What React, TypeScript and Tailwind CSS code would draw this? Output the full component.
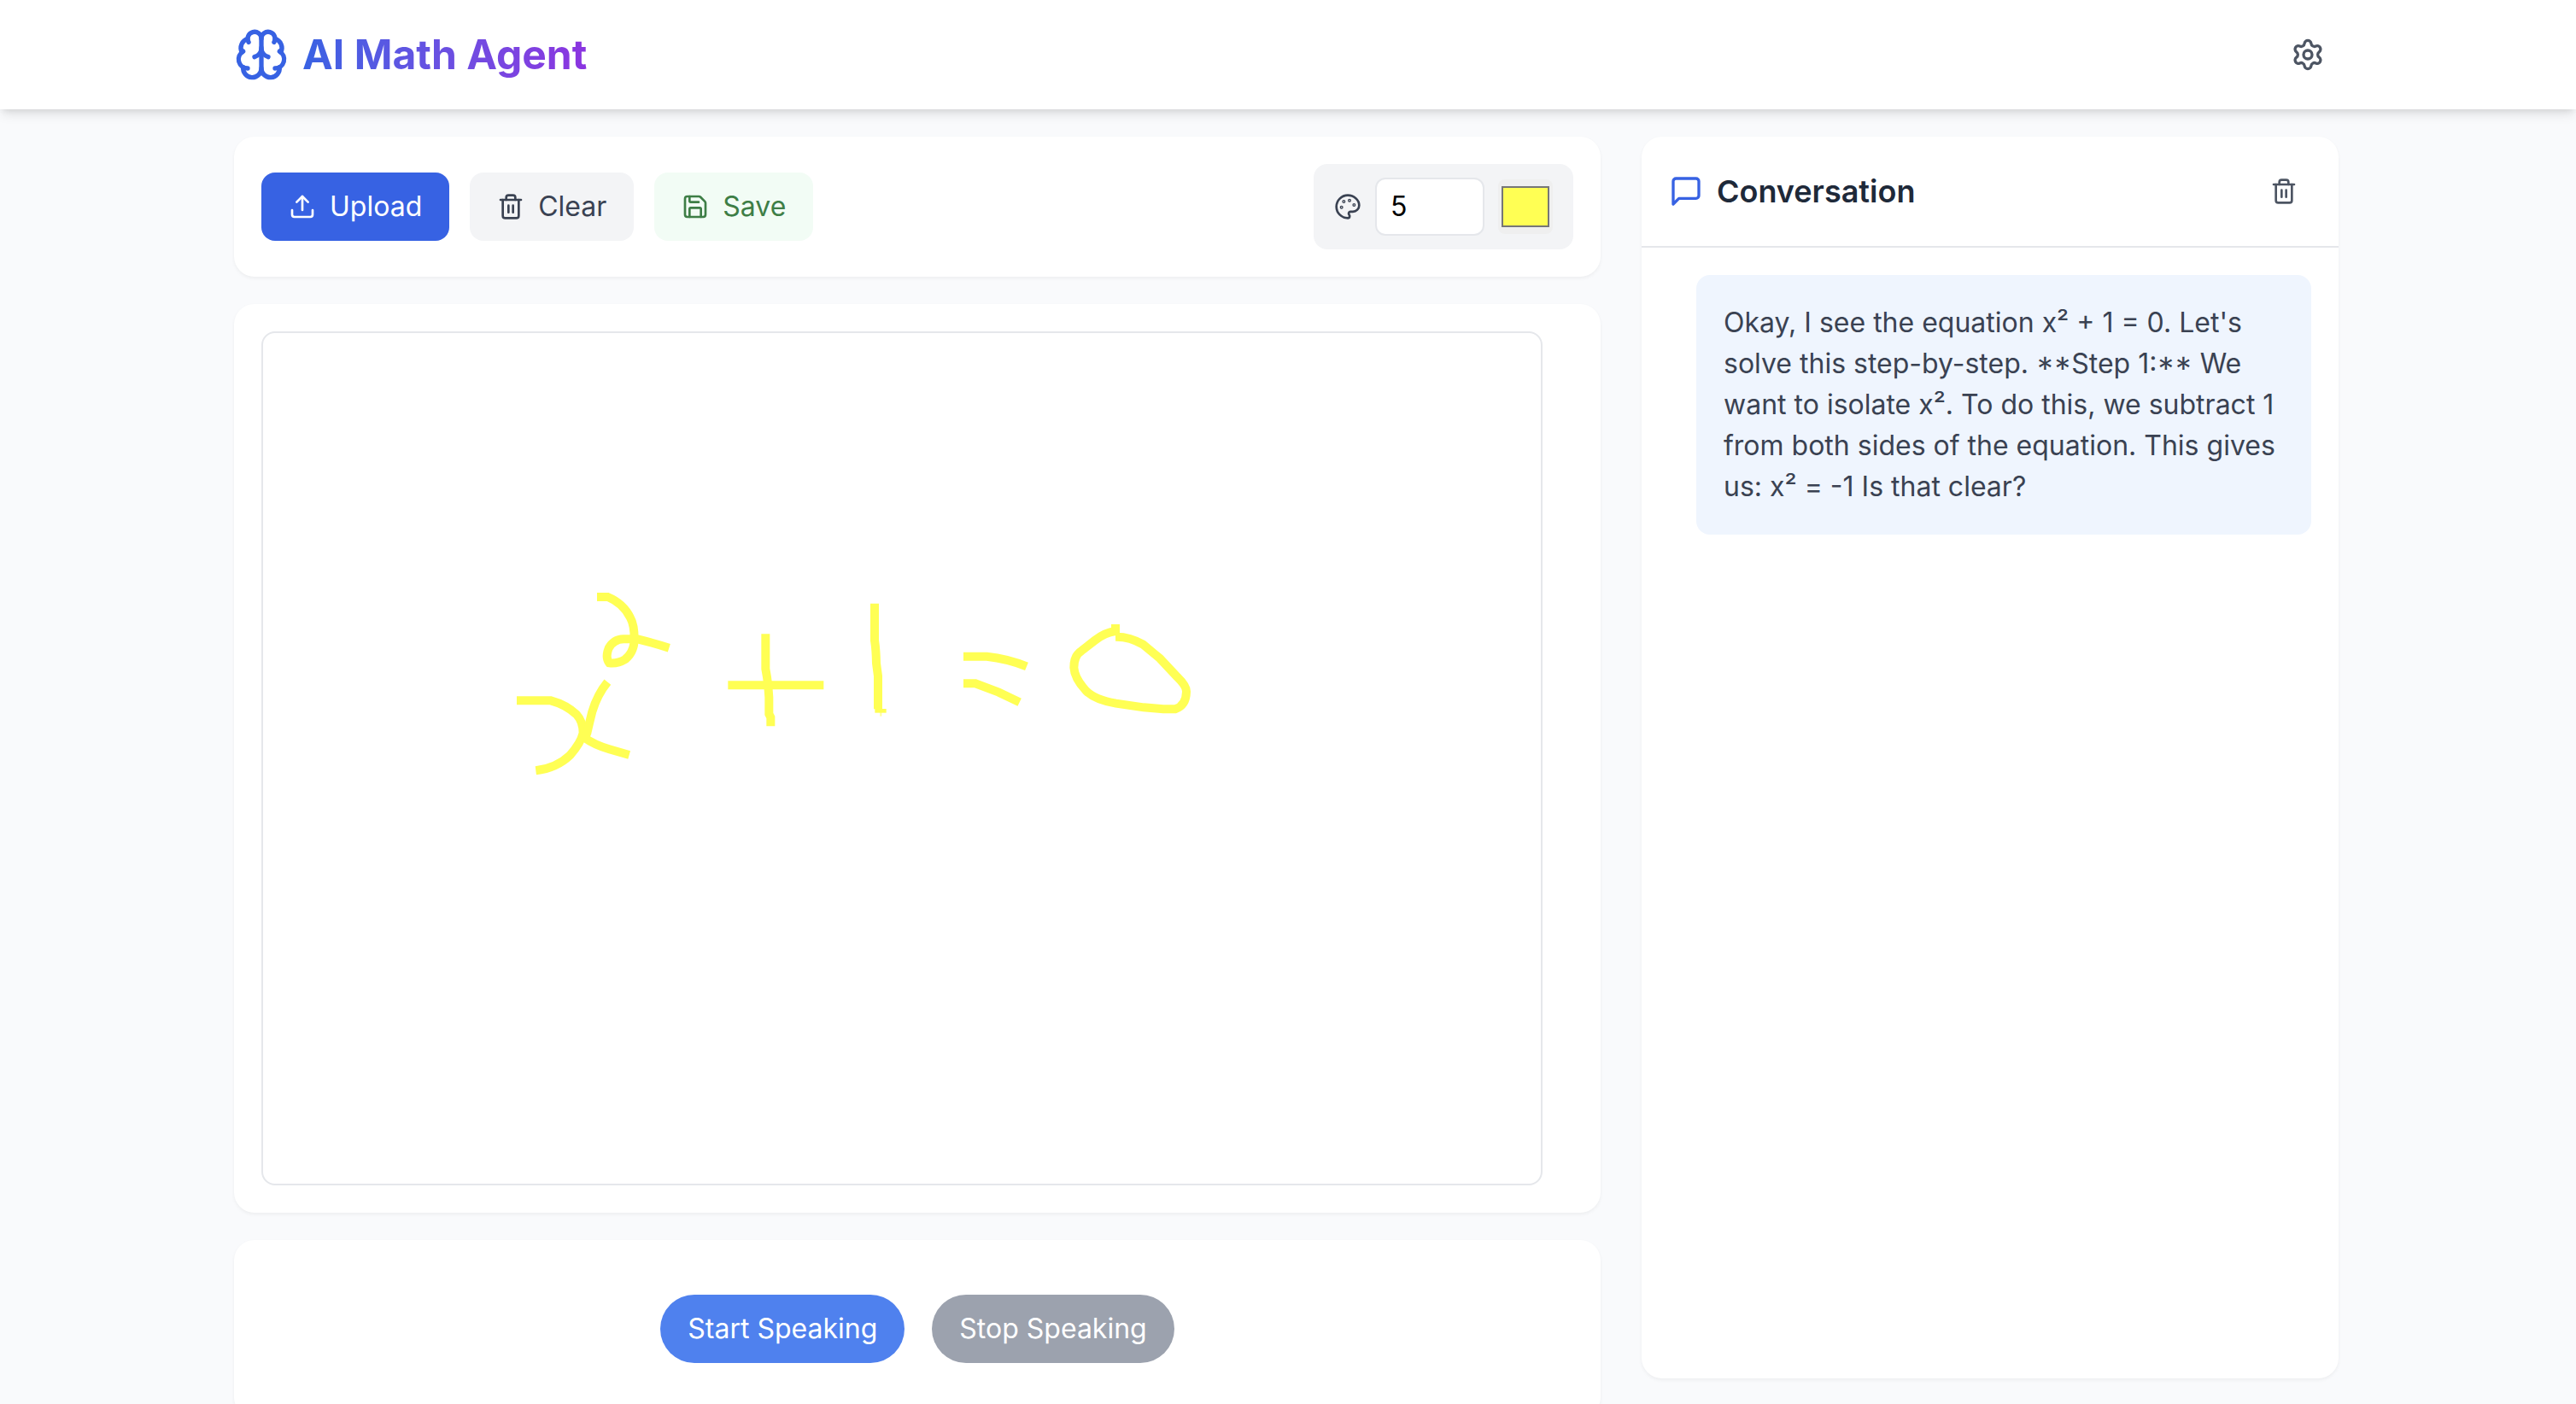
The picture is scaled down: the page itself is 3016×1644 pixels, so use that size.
import React from "react";
import { Brain, Settings } from "lucide-react";

const paths = {
  upload: ["M21 15v4a2 2 0 0 1-2 2H5a2 2 0 0 1-2-2v-4", "M17 8l-5-5-5 5", "M12 3v12"],
  trash: [
    "M3 6h18",
    "M19 6v14a2 2 0 0 1-2 2H7a2 2 0 0 1-2-2V6",
    "M8 6V4a2 2 0 0 1 2-2h4a2 2 0 0 1 2 2v2",
    "M10 11v6",
    "M14 11v6",
  ],
  save: [
    "M15.2 3a2 2 0 0 1 1.4.6l3.8 3.8a2 2 0 0 1 .6 1.4V19a2 2 0 0 1-2 2H5a2 2 0 0 1-2-2V5a2 2 0 0 1 2-2z",
    "M17 21v-7a1 1 0 0 0-1-1H8a1 1 0 0 0-1 1v7",
    "M7 3v4a1 1 0 0 0 1 1h7",
  ],
  message: ["M21 15a2 2 0 0 1-2 2H7l-4 4V5a2 2 0 0 1 2-2h14a2 2 0 0 1 2 2z"],
  palette: [
    "M12 2C6.5 2 2 6.5 2 12s4.5 10 10 10c.926 0 1.648-.746 1.648-1.688 0-.437-.18-.835-.437-1.125-.29-.289-.438-.652-.438-1.125a1.64 1.64 0 0 1 1.668-1.668h1.996c3.051 0 5.555-2.503 5.555-5.554C21.965 6.012 17.461 2 12 2z",
    "M13.5 6a.5.5 0 1 0 0 1 .5.5 0 1 0 0-1z",
    "M17.5 10a.5.5 0 1 0 0 1 .5.5 0 1 0 0-1z",
    "M8.5 7a.5.5 0 1 0 0 1 .5.5 0 1 0 0-1z",
    "M6.5 12a.5.5 0 1 0 0 1 .5.5 0 1 0 0-1z",
  ],
};

function Icon({ name, className }: { name: keyof typeof paths; className: string }) {
  return (
    <svg
      viewBox="0 0 24 24"
      fill="none"
      stroke="currentColor"
      strokeWidth={2}
      strokeLinecap="round"
      strokeLinejoin="round"
      aria-hidden="true"
      className={className}
    >
      {paths[name].map((d) => (
        <path key={d} d={d} />
      ))}
    </svg>
  );
}

const card = "rounded-3xl bg-white shadow-[0_2px_4px_rgba(0,0,0,0.05)]";
const button = "flex items-center gap-4 rounded-2xl px-8 py-4";

function Header() {
  return (
    <header className="relative bg-white pr-1 shadow-[0_8px_12px_-2px_rgba(0,0,0,0.1),0_4px_8px_-4px_rgba(0,0,0,0.1)]">
      <div className="mx-auto flex max-w-[2560px] items-center justify-between px-12 py-8">
        <div className="flex items-center gap-4">
          <Brain className="size-16 text-[#3762e3]" />
          <h1 className="bg-linear-to-r from-[#3762e3] to-[#8b34e0] bg-clip-text text-5xl leading-[64px] font-bold text-transparent">
            AI Math Agent
          </h1>
        </div>
        <button type="button" aria-label="Settings" className="px-4 py-3 text-[#4d5563]">
          <Settings className="size-10" />
        </button>
      </div>
    </header>
  );
}

function Toolbar() {
  return (
    <section className={`${card} flex items-center justify-between p-8`}>
      <div className="flex gap-6">
        <button type="button" className={`${button} bg-[#3762e3] text-white`}>
          <Icon name="upload" className="size-8" />
          Upload
        </button>
        <button type="button" className={`${button} bg-gray-100 text-[#3a4252]`}>
          <Icon name="trash" className="size-8" />
          Clear
        </button>
        <button type="button" className={`${button} bg-[#f2fcf5] text-[#3e7e46]`}>
          <Icon name="save" className="size-8" />
          Save
        </button>
      </div>
      <div className="flex items-center gap-4 rounded-2xl bg-gray-100 px-6 py-4">
        <Icon name="palette" className="size-8 text-[#3a4252]" />
        <input
          type="number"
          aria-label="Brush size"
          defaultValue={5}
          min={1}
          max={50}
          className="w-32 rounded-xl border-2 border-gray-200 bg-white px-4 py-2 text-black"
        />
        <input
          type="color"
          aria-label="Brush colour"
          defaultValue="#ffff54"
          className="size-16 rounded-lg bg-[#efefef] px-1 py-2 [&::-webkit-color-swatch]:rounded-none [&::-webkit-color-swatch]:border-2 [&::-webkit-color-swatch]:border-[#767676] [&::-webkit-color-swatch-wrapper]:p-0"
        />
      </div>
    </section>
  );
}

function Drawing() {
  return (
    <section className={`${card} p-8`}>
      <svg
        viewBox="0 0 4488 2988"
        role="img"
        aria-label="Handwritten equation"
        className="block aspect-[3/2] w-[1500px] max-w-full rounded-2xl border-2 border-gray-200"
      >
        <g transform="translate(816 840)" fill="none" stroke="#ffff54" strokeWidth={30}>
          <path d="M75 451H195Q250 466 285 500Q308 525 308 565Q300 600 262 643Q215 688 142 697" />
          <path d="M394 386Q358 430 340 490Q330 530 322 565L314 582Q345 605 400 622L470 642" />
          <path d="M357 87H395Q450 110 474 160Q488 185 488 235Q488 280 456 306Q430 322 400 319Q385 300 398 267Q415 236 450 235H500Q560 250 610 266" />
          <path d="M817 397H1153" />
          <path d="M949 217V340Q955 370 958 400L961 440V498L967 510V541" />
          <path d="M1332 110V240Q1337 270 1338 320L1344 365V481" />
          <path d="M1333 487H1373" strokeWidth={14} />
          <path d="M1354 480V506" strokeWidth={6} opacity={0.6} />
          <path d="M1644 296H1726Q1800 304 1866 331" />
          <path d="M1644 391H1686L1768 422L1841 457" />
          <path d="M2178 183V222M2178 207Q2140 212 2105 240L2060 275Q2032 292 2032 335Q2034 372 2075 417Q2106 448 2180 461L2277 475L2346 481H2388Q2426 468 2427 420Q2428 400 2395 368L2334 303L2275 254Q2228 226 2178 227" />
        </g>
      </svg>
    </section>
  );
}

function SpeechControls() {
  return (
    <section className={`${card} flex justify-center gap-8 p-16`}>
      <button type="button" className="rounded-full bg-[#4f81ee] px-8 py-4 text-white">
        Start Speaking
      </button>
      <button type="button" className="rounded-full bg-[#9ca2ae] px-8 py-4 text-white">
        Stop Speaking
      </button>
    </section>
  );
}

function Conversation() {
  return (
    <aside className={`${card} h-[calc(100vh-190px)]`}>
      <div className="flex items-center justify-between border-b-2 border-gray-200 p-8">
        <h2 className="flex items-center gap-4 text-4xl leading-[56px] font-semibold text-gray-800">
          <Icon name="message" className="size-10 text-[#3762e3]" />
          Conversation
        </h2>
        <button type="button" aria-label="Clear conversation" className="p-4 text-[#4d5563]">
          <Icon name="trash" className="size-8" />
        </button>
      </div>
      <div className="p-8">
        <p className="ml-8 rounded-2xl bg-[#eff5fe] p-8 text-[#3a4252]">
          Okay, I see the equation x² + 1 = 0. Let's solve this step-by-step.{" "}
          <span className="[font-feature-settings:'case']">**Step 1:**</span> We want to isolate x².
          To do this, we subtract 1 from both sides of the equation. This gives us: x² = -1 Is that
          clear?
        </p>
      </div>
    </aside>
  );
}

export default function App() {
  return (
    <div className="h-screen overflow-hidden bg-[#f9fafc] font-[Inter,sans-serif] text-[32px] leading-[48px]">
      <Header />
      <div className="pr-1">
        <main className="mx-auto grid max-w-[2560px] grid-cols-[minmax(0,100fr)_minmax(0,51fr)] items-start gap-12 px-12 py-8">
          <div className="flex flex-col gap-8">
            <Toolbar />
            <Drawing />
            <SpeechControls />
          </div>
          <Conversation />
        </main>
      </div>
    </div>
  );
}
